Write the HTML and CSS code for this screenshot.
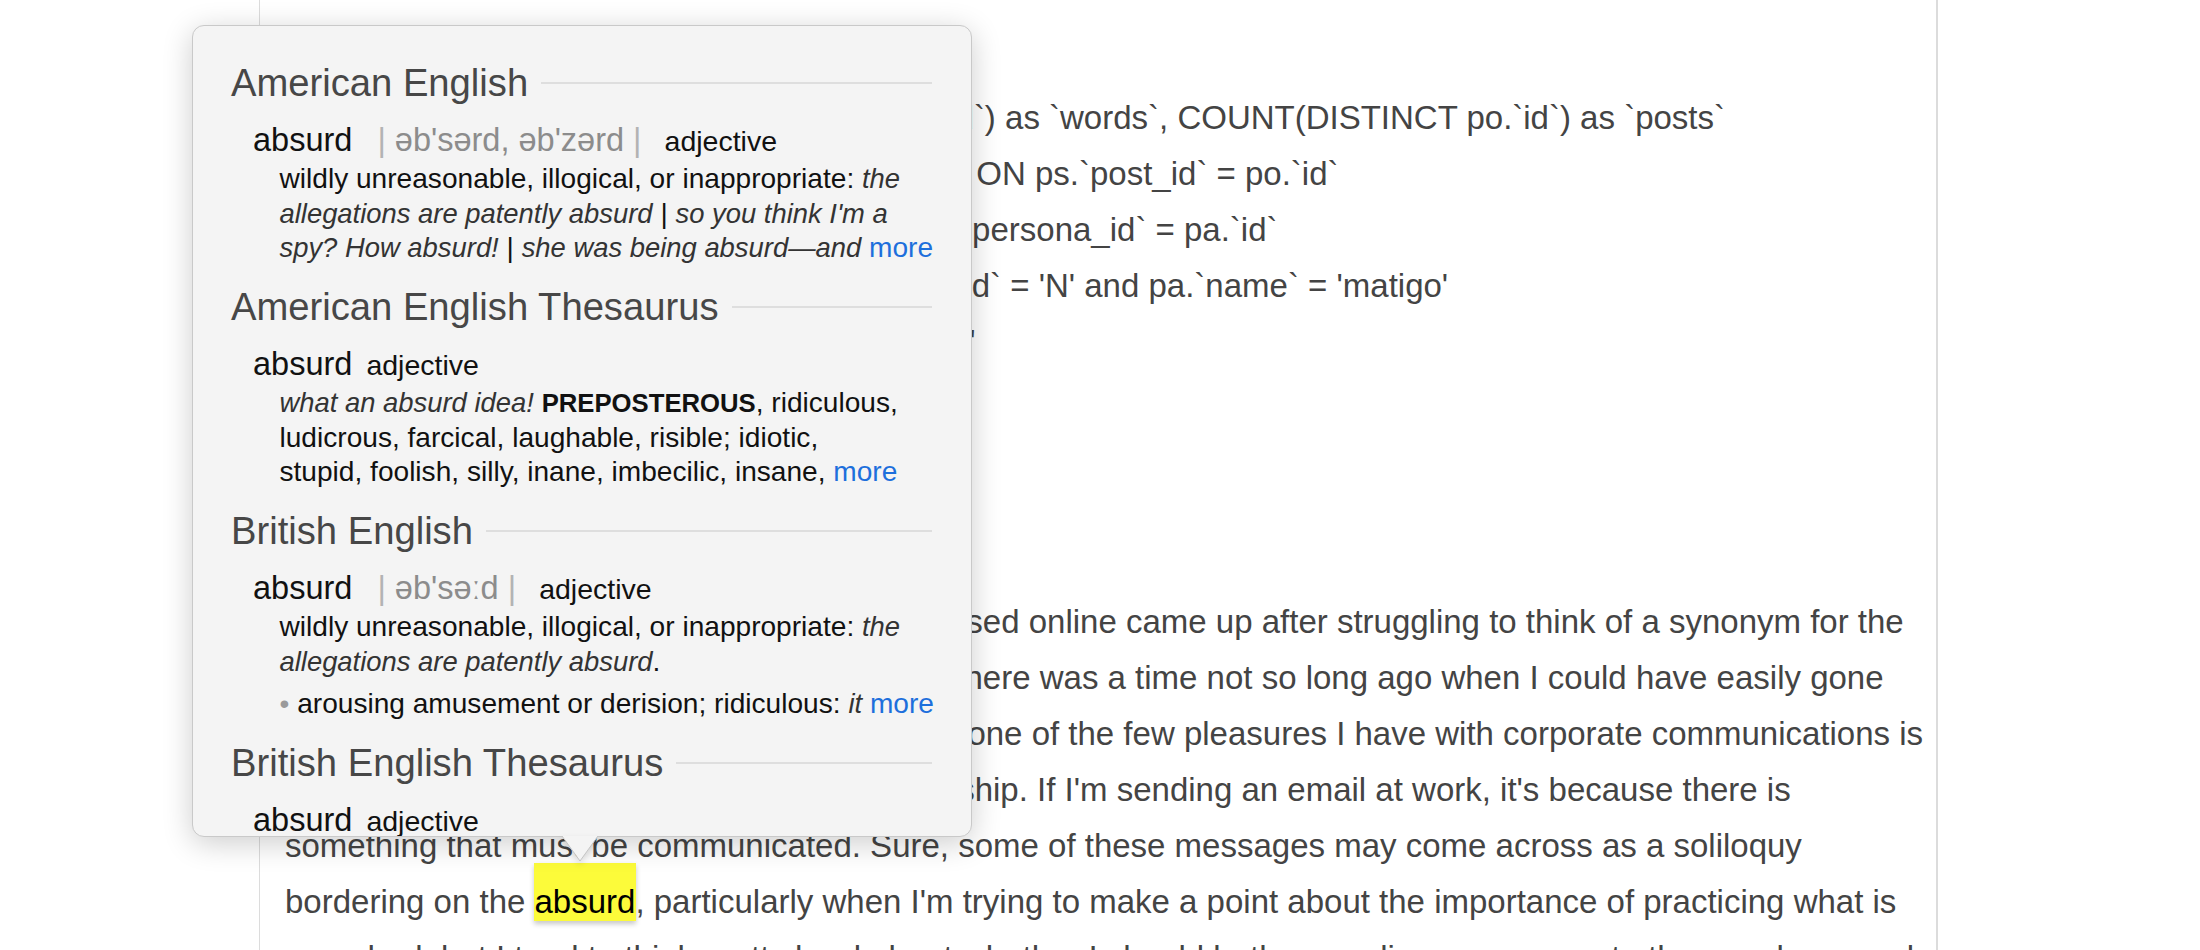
FILE: index.html
```html
<!DOCTYPE html>
<html lang="en">

<head>
    <meta charset="UTF-8">
    <meta name="viewport" content="width=device-width, initial-scale=1.0">
    <title>Word Count Notes</title>

    <link rel="stylesheet" href="styles.css">
</head>

<body>
    <div class="editor">
        <!-- the query I used for the numbers -->
        <div class="code">
            <div class="code-line">SELECT COUNT(ps.`word`), SUM(ps.`counted`) as `words`, COUNT(DISTINCT po.`id`) as `posts`</div>
            <div class="code-line">FROM `PostSearch` ps INNER JOIN `Post` po ON ps.`post_id` = po.`id`</div>
            <div class="code-line">LEFT OUTER JOIN `SitePersonas` pa ON po.`persona_id` = pa.`id`</div>
            <div class="code-line">WHERE po.`is_deleted` = 'N' and pa.`is_deleted` = 'N' and pa.`name` = 'matigo'</div>
            <div class="code-line">AND po.`published_at` &gt; '2024-01-01 00:00:00'</div>
        </div>

        <p class="prose">
            The idea to count every single word I've ever used online came up after struggling to think of a synonym for the<br>
            word "absurd" while drafting an email earlier. There was a time not so long ago when I could have easily gone<br>
            through a thesaurus for something fancier, but one of the few pleasures I have with corporate communications is<br>
            the freedom from needing to exhibit craftsmanship. If I'm sending an email at work, it's because there is<br>
            something that must be communicated. Sure, some of these messages may come across as a soliloquy<br>
            bordering on the <span class="hl">absurd</span>, particularly when I'm trying to make a point about the importance of practicing what is<br>
            preached, but I tend to think pretty hard about whether I should bother sending a message to the people around me.
        </p>
    </div>

    <div class="popover">
        <div class="popover-body">
            <section class="dict">
                <h2 class="dict-title">American English</h2>
                <div class="entry">
                    <div class="hw-row">
                        <span class="hw">absurd</span>
                        <span class="pron"><span class="bar">|</span> əb'sərd, əb'zərd <span class="bar">|</span></span>
                        <span class="pos">adjective</span>
                    </div>
                    <div class="def">
                        wildly unreasonable, illogical, or inappropriate: <i>the</i><br>
                        <i>allegations are patently absurd</i> | <i>so you think I'm a</i><br>
                        <i>spy? How absurd!</i> | <i>she was being absurd—and</i> <a class="more">more</a>
                    </div>
                </div>
            </section>

            <section class="dict">
                <h2 class="dict-title">American English Thesaurus</h2>
                <div class="entry">
                    <div class="hw-row">
                        <span class="hw">absurd</span>
                        <span class="pos">adjective</span>
                    </div>
                    <div class="def">
                        <i>what an absurd idea!</i> <b class="caps">PREPOSTEROUS</b>, ridiculous,<br>
                        ludicrous, farcical, laughable, risible; idiotic,<br>
                        stupid, foolish, silly, inane, imbecilic, insane, <a class="more">more</a>
                    </div>
                </div>
            </section>

            <section class="dict">
                <h2 class="dict-title">British English</h2>
                <div class="entry">
                    <div class="hw-row">
                        <span class="hw">absurd</span>
                        <span class="pron"><span class="bar">|</span> əb'səːd <span class="bar">|</span></span>
                        <span class="pos">adjective</span>
                    </div>
                    <div class="def">
                        wildly unreasonable, illogical, or inappropriate: <i>the</i><br>
                        <i>allegations are patently absurd</i>.
                    </div>
                    <div class="def sub">
                        <span class="bullet">•</span> arousing amusement or derision; ridiculous: <i>it</i> <a class="more">more</a>
                    </div>
                </div>
            </section>

            <section class="dict">
                <h2 class="dict-title">British English Thesaurus</h2>
                <div class="entry">
                    <div class="hw-row">
                        <span class="hw">absurd</span>
                        <span class="pos">adjective</span>
                    </div>
                    <div class="def">
                        <i>what an absurd idea!</i> <b class="caps">PREPOSTEROUS</b>, ridiculous,
                    </div>
                </div>
            </section>
        </div>

        <svg class="popover-arrow" width="36" height="26" viewBox="0 0 36 26">
            <path d="M0 0 L18 25 L36 0" fill="#f4f4f4" stroke="#c4c4c4" stroke-width="1" />
        </svg>
    </div>
</body>

</html>
```

FILE: styles.css
```css
body {
    margin: 0;
    height: 950px;
    overflow: hidden;
    background-color: #fff;
    font-family: "Liberation Sans", Arial, sans-serif;
}

.editor {
    box-sizing: border-box;
    width: 1679px;
    height: 950px;
    margin-left: 259px;
    padding: 90px 12px 0 25px;
    border-left: 1px solid #dcdcdc;
    border-right: 2px solid #dcdcdc;
    overflow: hidden;
    color: #444;
    font-size: 33px;
    line-height: 56px;
}

.code-line {
    white-space: pre;
}

.prose {
    margin: 224px 0 0;
    white-space: nowrap;
}

.hl {
    margin: 0 -1px;
    padding: 20px 1px 1px;
    background-color: #fcfb3a;
    color: #000;
    box-shadow: 0 3px 5px rgba(0, 0, 0, 0.22);
}

.popover {
    position: absolute;
    top: 25px;
    left: 192px;
    box-sizing: border-box;
    width: 780px;
    height: 812px;
    background-color: #f4f4f4;
    border: 1px solid #c9c9c9;
    border-radius: 12px;
    box-shadow: 0 6px 30px rgba(0, 0, 0, 0.2);
}

.popover-body {
    box-sizing: border-box;
    height: 100%;
    padding: 34px 39px 0 38px;
    overflow: hidden;
    border-radius: 12px;
}

.popover-arrow {
    position: absolute;
    top: 100%;
    left: 369px;
    display: block;
    filter: drop-shadow(0 3px 3px rgba(0, 0, 0, 0.12));
}

.dict + .dict {
    margin-top: 18.5px;
}

.dict-title {
    display: flex;
    align-items: center;
    margin: 0;
    font-size: 38.2px;
    line-height: 46px;
    font-weight: normal;
    color: #474747;
}

.dict-title::after {
    content: "";
    flex: 1;
    height: 2px;
    margin-left: 13px;
    background-color: #dedede;
}

.entry {
    padding-left: 22px;
}

.hw-row {
    display: flex;
    align-items: baseline;
    gap: 14px;
    margin-top: 14px;
    line-height: 40px;
}

.hw {
    font-size: 32.5px;
    color: #111;
}

.pron {
    margin: 0 9px 0 11px;
    font-size: 32.5px;
    color: #8c8c8c;
}

.bar {
    color: #b3b3b3;
}

.pos {
    font-size: 28.5px;
    color: #111;
}

.def {
    margin-top: 1px;
    padding-left: 26.5px;
    font-size: 28.1px;
    line-height: 34.5px;
    white-space: nowrap;
    color: #111;
}

.def i {
    font-size: 27.4px;
    color: #333;
}

.sub {
    margin-top: 8px;
}

.bullet {
    color: #9a9a9a;
}

.caps {
    font-size: 25.7px;
    font-weight: bold;
}

.more {
    color: #1d6fdc;
}
```
